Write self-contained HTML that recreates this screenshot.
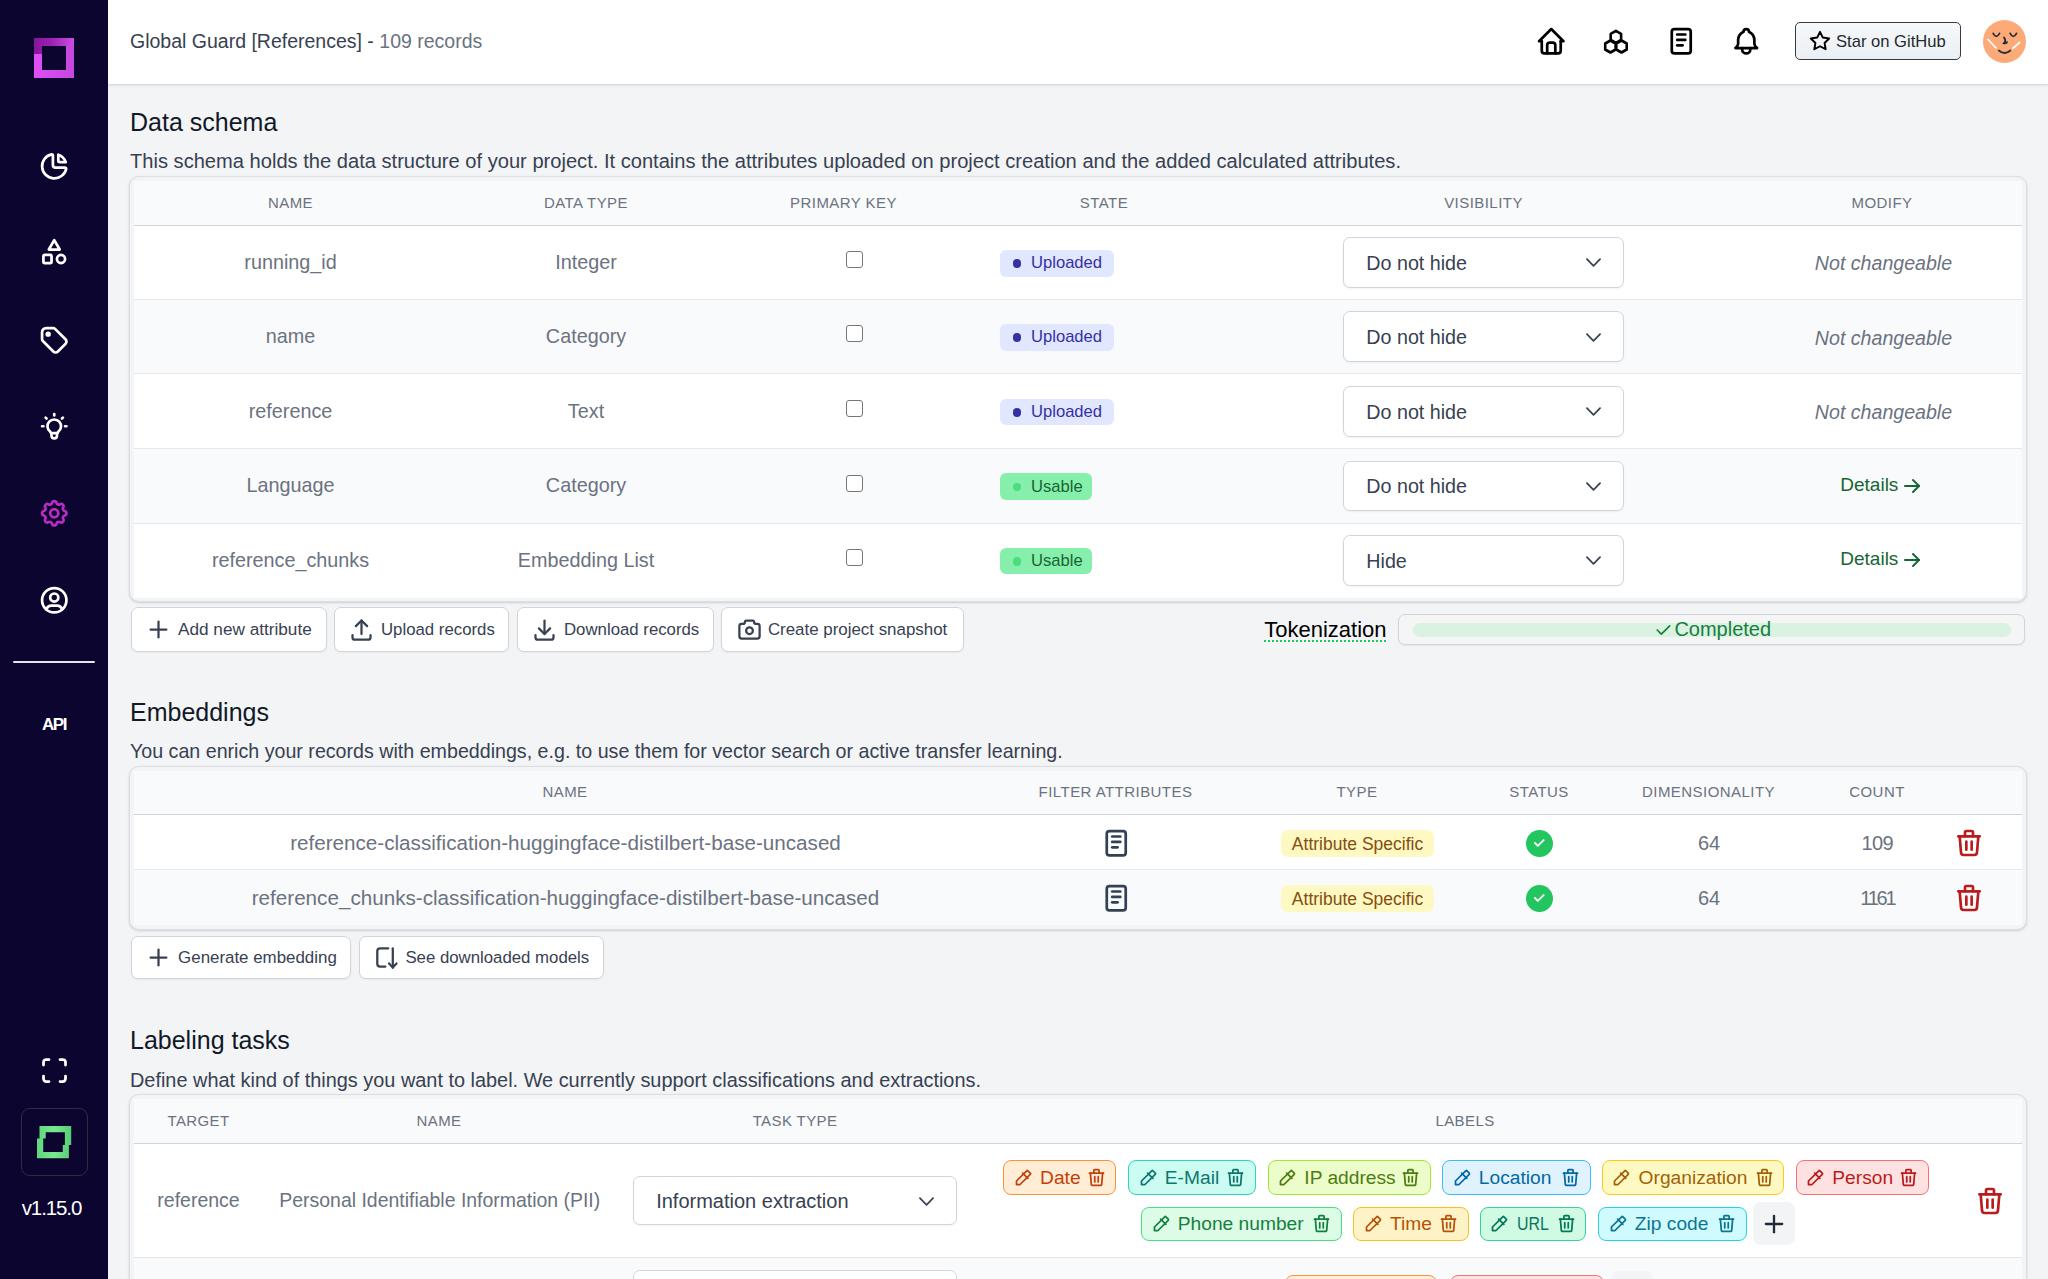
<!DOCTYPE html><html><head><meta charset="utf-8"><style>
html,body{margin:0;padding:0;width:2048px;height:1279px;overflow:hidden;background:#f3f4f6;font-family:"Liberation Sans", sans-serif;}
.t{position:absolute;white-space:nowrap;overflow:visible}
.i{position:absolute;overflow:visible}
.b{position:absolute;box-sizing:border-box}

</style></head><body>
<div class="b" style="left:108px;top:0px;width:1940px;height:84px;background:#fff;box-shadow:0 1px 3px rgba(0,0,0,0.10),0 1px 2px rgba(0,0,0,0.06)"></div>
<div class="t" style="left:130.0px;top:26.5px;width:1400px;height:29px;line-height:29px;font-size:19.5px;color:#374151;text-align:left;font-weight:400;font-style:normal;letter-spacing:0px;">Global Guard [References] - <span style="color:#6b7280">109 records</span></div>
<svg class="i" style="left:1534.5px;top:25.0px;width:32.5px;height:32.5px;" viewBox="0 0 24 24" fill="none" stroke="#000" stroke-width="2" stroke-linecap="round" stroke-linejoin="round"><path d="M5 12l-2 0l9 -9l9 9l-2 0"/><path d="M5 12v7a2 2 0 0 0 2 2h10a2 2 0 0 0 2 -2v-7"/><path d="M9 21v-6a2 2 0 0 1 2 -2h2a2 2 0 0 1 2 2v6"/></svg>
<svg class="i" style="left:1664.8px;top:25.0px;width:32.5px;height:32.5px;" viewBox="0 0 24 24" fill="none" stroke="#000" stroke-width="2" stroke-linecap="round" stroke-linejoin="round"><path d="M5 3m0 2a2 2 0 0 1 2 -2h10a2 2 0 0 1 2 2v14a2 2 0 0 1 -2 2h-10a2 2 0 0 1 -2 -2z"/><path d="M9 7l6 0"/><path d="M9 11l6 0"/><path d="M9 15l4 0"/></svg>
<svg class="i" style="left:1729.8px;top:25.0px;width:32.5px;height:32.5px;" viewBox="0 0 24 24" fill="none" stroke="#000" stroke-width="2" stroke-linecap="round" stroke-linejoin="round"><path d="M10 5a2 2 0 1 1 4 0a7 7 0 0 1 4 6v3a4 4 0 0 0 2 3h-16a4 4 0 0 0 2 -3v-3a7 7 0 0 1 4 -6"/><path d="M9 17v1a3 3 0 0 0 6 0v-1"/></svg>
<svg class="i" style="left:1600px;top:25px;width:32px;height:32px" viewBox="0 0 32 32" fill="none" stroke="#000" stroke-width="2.6" stroke-linejoin="round"><path d="M15.90 5.90L21.10 8.90L21.10 14.90L15.90 17.90L10.70 14.90L10.70 8.90ZM10.40 15.50L15.60 18.50L15.60 24.50L10.40 27.50L5.20 24.50L5.20 18.50ZM21.50 15.50L26.70 18.50L26.70 24.50L21.50 27.50L16.30 24.50L16.30 18.50Z"/></svg>
<div class="b" style="left:1795px;top:22px;width:166px;height:38px;border:1.3px solid #373b41;border-radius:5px;background:linear-gradient(#f6f8fa,#ebf0f4)"></div>
<svg class="i" style="left:1809.3px;top:29.5px;width:22px;height:22px;" viewBox="0 0 24 24" fill="none" stroke="#000" stroke-width="2.1" stroke-linecap="round" stroke-linejoin="round"><path d="M12 17.75l-6.172 3.245l1.179 -6.873l-5 -4.867l6.9 -1l3.086 -6.253l3.086 6.253l6.9 1l-5 4.867l1.179 6.873z"/></svg>
<div class="t" style="left:1836.0px;top:30.0px;width:1400px;height:24px;line-height:24px;font-size:16.6px;color:#24292f;text-align:left;font-weight:400;font-style:normal;letter-spacing:0px;">Star on GitHub</div>
<div class="b" style="left:1983px;top:19.5px;width:43.3px;height:43.3px;border-radius:50%;background:#fbaa78"></div>
<svg class="i" style="left:1983px;top:19.5px;width:43.3px;height:43.3px" viewBox="0 0 43.3 43.3" fill="none" stroke-linecap="round">
<path d="M5 19.5l8 8.5" stroke="#fff" stroke-width="1.7"/><path d="M36.5 22.5l-6.7 6" stroke="#fff" stroke-width="1.7"/>
<path d="M10.2 13.4q3 6 6.3 0" stroke="#2b2b3a" stroke-width="1.8"/><path d="M27.2 13.4q3 6 6.3 0" stroke="#2b2b3a" stroke-width="1.8"/>
<path d="M21 17.5q2.5 3 0 5.7q2.5 0.5 3 -1" stroke="#2b2b3a" stroke-width="1.9"/><path d="M15.8 30.5q5.8 5 11.6 0" stroke="#2b2b3a" stroke-width="1.7"/>
</svg>
<div class="b" style="left:0px;top:0px;width:108px;height:1279px;background:#0b0530"></div>
<svg class="i" style="left:34px;top:38px;width:40px;height:40px" viewBox="0 0 40 40">
<defs><linearGradient id="lg1" x1="0" y1="0" x2="1" y2="0"><stop offset="0" stop-color="#84169a"/><stop offset="0.45" stop-color="#9c22b4"/><stop offset="1" stop-color="#cf4de6"/></linearGradient>
<linearGradient id="lg2" x1="0" y1="0" x2="1" y2="0"><stop offset="0" stop-color="#e14ff7"/><stop offset="1" stop-color="#c646de"/></linearGradient></defs>
<path d="M0 0H40V40H0Z M8 8V32H32V8Z" fill="url(#lg2)" fill-rule="evenodd"/>
<path d="M0 0H40V8H8V16H0Z" fill="url(#lg1)"/>
</svg>
<svg class="i" style="left:37.8px;top:150.2px;width:32.5px;height:32.5px;" viewBox="0 0 24 24" fill="none" stroke="#fff" stroke-width="2" stroke-linecap="round" stroke-linejoin="round"><path d="M10 3.2a9 9 0 1 0 10.8 10.8a1 1 0 0 0 -1 -1h-6.8a2 2 0 0 1 -2 -2v-7a.9 .9 0 0 0 -1 -.8"/><path d="M15 3.5a9 9 0 0 1 5.5 5.5h-4.5a1 1 0 0 1 -1 -1v-4.5"/></svg>
<svg class="i" style="left:37.8px;top:236.2px;width:32.5px;height:32.5px;" viewBox="0 0 24 24" fill="none" stroke="#fff" stroke-width="2" stroke-linecap="round" stroke-linejoin="round"><path d="M12 3l-4 7h8z"/><path d="M17 17m-3 0a3 3 0 1 0 6 0a3 3 0 1 0 -6 0"/><path d="M4 14m0 1a1 1 0 0 1 1 -1h4a1 1 0 0 1 1 1v4a1 1 0 0 1 -1 1h-4a1 1 0 0 1 -1 -1z"/></svg>
<svg class="i" style="left:37.8px;top:323.8px;width:32.5px;height:32.5px;" viewBox="0 0 24 24" fill="none" stroke="#fff" stroke-width="2" stroke-linecap="round" stroke-linejoin="round"><path d="M7.5 7.5m-1 0a1 1 0 1 0 2 0a1 1 0 1 0 -2 0"/><path d="M3 6v5.172a2 2 0 0 0 .586 1.414l7.71 7.71a2.41 2.41 0 0 0 3.408 0l5.592 -5.592a2.41 2.41 0 0 0 0 -3.408l-7.71 -7.71a2 2 0 0 0 -1.414 -.586h-5.172a3 3 0 0 0 -3 3z"/></svg>
<svg class="i" style="left:37.8px;top:410.2px;width:32.5px;height:32.5px;" viewBox="0 0 24 24" fill="none" stroke="#fff" stroke-width="2" stroke-linecap="round" stroke-linejoin="round"><path d="M3 12h1m8 -9v1m8 8h1m-15.4 -6.4l.7 .7m12.1 -.7l-.7 .7"/><path d="M9 16a5 5 0 1 1 6 0a3.5 3.5 0 0 0 -1 3a2 2 0 0 1 -4 0a3.5 3.5 0 0 0 -1 -3"/><path d="M9.7 17l4.6 0"/></svg>
<svg class="i" style="left:37.8px;top:583.8px;width:32.5px;height:32.5px;" viewBox="0 0 24 24" fill="none" stroke="#fff" stroke-width="2" stroke-linecap="round" stroke-linejoin="round"><path d="M12 12m-9 0a9 9 0 1 0 18 0a9 9 0 1 0 -18 0"/><path d="M12 10m-3 0a3 3 0 1 0 6 0a3 3 0 1 0 -6 0"/><path d="M6.168 18.849a4 4 0 0 1 3.832 -2.849h4a4 4 0 0 1 3.834 2.855"/></svg>
<svg class="i" style="left:37.8px;top:497.0px;width:32.5px;height:32.5px;" viewBox="0 0 24 24" fill="none" stroke="#b72cc2" stroke-width="2" stroke-linecap="round" stroke-linejoin="round"><path d="M10.325 4.317c.426 -1.756 2.924 -1.756 3.35 0a1.724 1.724 0 0 0 2.573 1.066c1.543 -.94 3.31 .826 2.37 2.37a1.724 1.724 0 0 0 1.065 2.572c1.756 .426 1.756 2.924 0 3.35a1.724 1.724 0 0 0 -1.066 2.573c.94 1.543 -.826 3.31 -2.37 2.37a1.724 1.724 0 0 0 -2.572 1.065c-.426 1.756 -2.924 1.756 -3.35 0a1.724 1.724 0 0 0 -2.573 -1.066c-1.543 .94 -3.31 -.826 -2.37 -2.37a1.724 1.724 0 0 0 -1.065 -2.572c-1.756 -.426 -1.756 -2.924 0 -3.35a1.724 1.724 0 0 0 1.066 -2.573c-.94 -1.543 .826 -3.31 2.37 -2.37c1 .608 2.296 .07 2.572 -1.065z"/><path d="M9 12a3 3 0 1 0 6 0a3 3 0 0 0 -6 0"/></svg>
<div class="b" style="left:13px;top:661px;width:82px;height:2px;background:#e5e5ea;border-radius:2px"></div>
<div class="t" style="left:4.0px;top:712.0px;width:100px;height:25px;line-height:25px;font-size:17px;color:#fff;text-align:center;font-weight:700;font-style:normal;letter-spacing:-1.5px;">API</div>
<svg class="i" style="left:37.5px;top:1053.5px;width:33px;height:33px;" viewBox="0 0 24 24" fill="none" stroke="#fff" stroke-width="2" stroke-linecap="round" stroke-linejoin="round"><path d="M4 8v-2a2 2 0 0 1 2 -2h2"/><path d="M4 16v2a2 2 0 0 0 2 2h2"/><path d="M16 4h2a2 2 0 0 1 2 2v2"/><path d="M16 20h2a2 2 0 0 0 2 -2v-2"/></svg>
<div class="b" style="left:20.6px;top:1108px;width:67.1px;height:67.70000000000005px;border:1px solid #2c2f42;border-radius:9px"></div>
<svg class="i" style="left:37px;top:1125.5px;width:34.5px;height:32.5px" viewBox="0 0 34.5 32.5">
<defs><linearGradient id="gg" x1="0" y1="0" x2="1" y2="0"><stop offset="0" stop-color="#5fd77c"/><stop offset="0.5" stop-color="#7ae892"/><stop offset="1" stop-color="#56cd72"/></linearGradient></defs>
<path fill="url(#gg)" fill-rule="evenodd" d="M2.5 0H34.2V19H31.9V32.3H0V12.6H2.5Z M8.7 6.2V12.6H6.2V26.1H25.8V19H27.9V6.2Z"/>
</svg>
<div class="t" style="left:1.5px;top:1193.3px;width:100px;height:30px;line-height:30px;font-size:20.5px;color:#fff;text-align:center;font-weight:400;font-style:normal;letter-spacing:-1.1px;">v1.15.0</div>
<div class="t" style="left:130.0px;top:103.8px;width:1400px;height:37px;line-height:37px;font-size:25px;color:#111827;text-align:left;font-weight:400;font-style:normal;letter-spacing:0px;">Data schema</div>
<div class="t" style="left:130.0px;top:146.3px;width:1400px;height:30px;line-height:30px;font-size:20.13px;color:#374151;text-align:left;font-weight:400;font-style:normal;letter-spacing:0px;">This schema holds the data structure of your project. It contains the attributes uploaded on project creation and the added calculated attributes.</div>
<div class="b" style="left:129px;top:176.4px;width:1898px;height:426.0px;border:1px solid #dcdee3;border-radius:10px;background:#f3f4f6;box-shadow:0 1px 3px rgba(0,0,0,0.10),0 1px 2px rgba(0,0,0,0.06)"></div>
<div class="b" style="left:134px;top:181px;width:1888px;height:416.5px;background:#fff"></div>
<div class="b" style="left:134px;top:181px;width:1888px;height:45px;background:#f9fafb;border-bottom:1.5px solid #d1d5db"></div>
<div class="t" style="left:-109.5px;top:192.0px;width:800px;height:22px;line-height:22px;font-size:15px;color:#6b7280;text-align:center;font-weight:400;font-style:normal;letter-spacing:0.45px;">NAME</div>
<div class="t" style="left:186.0px;top:192.0px;width:800px;height:22px;line-height:22px;font-size:15px;color:#6b7280;text-align:center;font-weight:400;font-style:normal;letter-spacing:0.45px;">DATA TYPE</div>
<div class="t" style="left:443.5px;top:192.0px;width:800px;height:22px;line-height:22px;font-size:15px;color:#6b7280;text-align:center;font-weight:400;font-style:normal;letter-spacing:0.45px;">PRIMARY KEY</div>
<div class="t" style="left:704.0px;top:192.0px;width:800px;height:22px;line-height:22px;font-size:15px;color:#6b7280;text-align:center;font-weight:400;font-style:normal;letter-spacing:0.45px;">STATE</div>
<div class="t" style="left:1083.5px;top:192.0px;width:800px;height:22px;line-height:22px;font-size:15px;color:#6b7280;text-align:center;font-weight:400;font-style:normal;letter-spacing:0.45px;">VISIBILITY</div>
<div class="t" style="left:1482.0px;top:192.0px;width:800px;height:22px;line-height:22px;font-size:15px;color:#6b7280;text-align:center;font-weight:400;font-style:normal;letter-spacing:0.45px;">MODIFY</div>
<div class="b" style="left:134px;top:226px;width:1888px;height:73.5px;background:#fff;border-bottom:1px solid #e5e7eb;"></div>
<div class="t" style="left:-109.5px;top:247.9px;width:800px;height:29px;line-height:29px;font-size:19.8px;color:#6b7280;text-align:center;font-weight:400;font-style:normal;letter-spacing:0px;">running_id</div>
<div class="t" style="left:186.0px;top:247.9px;width:800px;height:29px;line-height:29px;font-size:19.8px;color:#6b7280;text-align:center;font-weight:400;font-style:normal;letter-spacing:0px;">Integer</div>
<div class="b" style="left:846px;top:251.25px;width:17px;height:17.0px;border:1.4px solid #767676;border-radius:3px;background:#fff"></div>
<div class="b" style="left:1000px;top:249.95px;width:114px;height:26.69999999999999px;background:#e0e7ff;border-radius:6px"></div>
<div class="b" style="left:1012.5px;top:259.3px;width:8.6px;height:8.6px;border-radius:50%;background:#3730a3"></div>
<div class="t" style="left:1031.0px;top:251.2px;width:1400px;height:24px;line-height:24px;font-size:16.6px;color:#3730a3;text-align:left;font-weight:400;font-style:normal;letter-spacing:0px;">Uploaded</div>
<div class="b" style="left:1343.3px;top:237.25px;width:281.10000000000014px;height:50.5px;border:1px solid #d1d5db;border-radius:7px;background:#fff;box-shadow:0 1px 2px rgba(0,0,0,0.05)"></div>
<div class="t" style="left:1366.3px;top:248.9px;width:1400px;height:29px;line-height:29px;font-size:19.7px;color:#374151;text-align:left;font-weight:400;font-style:normal;letter-spacing:0px;">Do not hide</div>
<svg class="i" style="left:1583.2px;top:252.4px;width:21px;height:21px;" viewBox="0 0 24 24" fill="none" stroke="#374151" stroke-width="2" stroke-linecap="round" stroke-linejoin="round"><path d="M19.5 8.25l-7.5 7.5-7.5-7.5"/></svg>
<div class="t" style="left:1483.5px;top:249.4px;width:800px;height:29px;line-height:29px;font-size:19.6px;color:#6b7280;text-align:center;font-weight:400;font-style:italic;letter-spacing:0px;">Not changeable</div>
<div class="b" style="left:134px;top:299.5px;width:1888px;height:74.69999999999999px;background:#f9fafb;border-bottom:1px solid #e5e7eb;"></div>
<div class="t" style="left:-109.5px;top:322.1px;width:800px;height:29px;line-height:29px;font-size:19.8px;color:#6b7280;text-align:center;font-weight:400;font-style:normal;letter-spacing:0px;">name</div>
<div class="t" style="left:186.0px;top:322.1px;width:800px;height:29px;line-height:29px;font-size:19.8px;color:#6b7280;text-align:center;font-weight:400;font-style:normal;letter-spacing:0px;">Category</div>
<div class="b" style="left:846px;top:325.35px;width:17px;height:17.0px;border:1.4px solid #767676;border-radius:3px;background:#fff"></div>
<div class="b" style="left:1000px;top:324.05px;width:114px;height:26.69999999999999px;background:#e0e7ff;border-radius:6px"></div>
<div class="b" style="left:1012.5px;top:333.4px;width:8.6px;height:8.6px;border-radius:50%;background:#3730a3"></div>
<div class="t" style="left:1031.0px;top:325.4px;width:1400px;height:24px;line-height:24px;font-size:16.6px;color:#3730a3;text-align:left;font-weight:400;font-style:normal;letter-spacing:0px;">Uploaded</div>
<div class="b" style="left:1343.3px;top:311.35px;width:281.10000000000014px;height:50.5px;border:1px solid #d1d5db;border-radius:7px;background:#fff;box-shadow:0 1px 2px rgba(0,0,0,0.05)"></div>
<div class="t" style="left:1366.3px;top:323.1px;width:1400px;height:29px;line-height:29px;font-size:19.7px;color:#374151;text-align:left;font-weight:400;font-style:normal;letter-spacing:0px;">Do not hide</div>
<svg class="i" style="left:1583.2px;top:326.6px;width:21px;height:21px;" viewBox="0 0 24 24" fill="none" stroke="#374151" stroke-width="2" stroke-linecap="round" stroke-linejoin="round"><path d="M19.5 8.25l-7.5 7.5-7.5-7.5"/></svg>
<div class="t" style="left:1483.5px;top:323.6px;width:800px;height:29px;line-height:29px;font-size:19.6px;color:#6b7280;text-align:center;font-weight:400;font-style:italic;letter-spacing:0px;">Not changeable</div>
<div class="b" style="left:134px;top:374.2px;width:1888px;height:74.69999999999999px;background:#fff;border-bottom:1px solid #e5e7eb;"></div>
<div class="t" style="left:-109.5px;top:396.7px;width:800px;height:29px;line-height:29px;font-size:19.8px;color:#6b7280;text-align:center;font-weight:400;font-style:normal;letter-spacing:0px;">reference</div>
<div class="t" style="left:186.0px;top:396.7px;width:800px;height:29px;line-height:29px;font-size:19.8px;color:#6b7280;text-align:center;font-weight:400;font-style:normal;letter-spacing:0px;">Text</div>
<div class="b" style="left:846px;top:400.04999999999995px;width:17px;height:17.0px;border:1.4px solid #767676;border-radius:3px;background:#fff"></div>
<div class="b" style="left:1000px;top:398.74999999999994px;width:114px;height:26.69999999999999px;background:#e0e7ff;border-radius:6px"></div>
<div class="b" style="left:1012.5px;top:408.1px;width:8.6px;height:8.6px;border-radius:50%;background:#3730a3"></div>
<div class="t" style="left:1031.0px;top:400.0px;width:1400px;height:24px;line-height:24px;font-size:16.6px;color:#3730a3;text-align:left;font-weight:400;font-style:normal;letter-spacing:0px;">Uploaded</div>
<div class="b" style="left:1343.3px;top:386.04999999999995px;width:281.10000000000014px;height:50.5px;border:1px solid #d1d5db;border-radius:7px;background:#fff;box-shadow:0 1px 2px rgba(0,0,0,0.05)"></div>
<div class="t" style="left:1366.3px;top:397.7px;width:1400px;height:29px;line-height:29px;font-size:19.7px;color:#374151;text-align:left;font-weight:400;font-style:normal;letter-spacing:0px;">Do not hide</div>
<svg class="i" style="left:1583.2px;top:401.2px;width:21px;height:21px;" viewBox="0 0 24 24" fill="none" stroke="#374151" stroke-width="2" stroke-linecap="round" stroke-linejoin="round"><path d="M19.5 8.25l-7.5 7.5-7.5-7.5"/></svg>
<div class="t" style="left:1483.5px;top:398.2px;width:800px;height:29px;line-height:29px;font-size:19.6px;color:#6b7280;text-align:center;font-weight:400;font-style:italic;letter-spacing:0px;">Not changeable</div>
<div class="b" style="left:134px;top:448.9px;width:1888px;height:74.70000000000005px;background:#f9fafb;border-bottom:1px solid #e5e7eb;"></div>
<div class="t" style="left:-109.5px;top:471.4px;width:800px;height:29px;line-height:29px;font-size:19.8px;color:#6b7280;text-align:center;font-weight:400;font-style:normal;letter-spacing:0px;">Language</div>
<div class="t" style="left:186.0px;top:471.4px;width:800px;height:29px;line-height:29px;font-size:19.8px;color:#6b7280;text-align:center;font-weight:400;font-style:normal;letter-spacing:0px;">Category</div>
<div class="b" style="left:846px;top:474.75px;width:17px;height:17.0px;border:1.4px solid #767676;border-radius:3px;background:#fff"></div>
<div class="b" style="left:1000px;top:473.45px;width:92px;height:26.69999999999999px;background:#86efac;border-radius:6px"></div>
<div class="b" style="left:1012.5px;top:482.8px;width:8.6px;height:8.6px;border-radius:50%;background:#4ade80"></div>
<div class="t" style="left:1031.0px;top:474.8px;width:1400px;height:24px;line-height:24px;font-size:16.6px;color:#166534;text-align:left;font-weight:400;font-style:normal;letter-spacing:0px;">Usable</div>
<div class="b" style="left:1343.3px;top:460.75px;width:281.10000000000014px;height:50.5px;border:1px solid #d1d5db;border-radius:7px;background:#fff;box-shadow:0 1px 2px rgba(0,0,0,0.05)"></div>
<div class="t" style="left:1366.3px;top:472.4px;width:1400px;height:29px;line-height:29px;font-size:19.7px;color:#374151;text-align:left;font-weight:400;font-style:normal;letter-spacing:0px;">Do not hide</div>
<svg class="i" style="left:1583.2px;top:475.9px;width:21px;height:21px;" viewBox="0 0 24 24" fill="none" stroke="#374151" stroke-width="2" stroke-linecap="round" stroke-linejoin="round"><path d="M19.5 8.25l-7.5 7.5-7.5-7.5"/></svg>
<div class="t" style="left:1840.3px;top:470.9px;width:1400px;height:28px;line-height:28px;font-size:19px;color:#166534;text-align:left;font-weight:400;font-style:normal;letter-spacing:0px;">Details</div>
<svg class="i" style="left:1900.0px;top:473.6px;width:24px;height:24px;" viewBox="0 0 24 24" fill="none" stroke="#166534" stroke-width="2" stroke-linecap="round" stroke-linejoin="round"><path d="M5 12l14 0"/><path d="M13 18l6 -6"/><path d="M13 6l6 6"/></svg>
<div class="b" style="left:134px;top:523.6px;width:1888px;height:73.89999999999998px;background:#fff;"></div>
<div class="t" style="left:-109.5px;top:545.8px;width:800px;height:29px;line-height:29px;font-size:19.8px;color:#6b7280;text-align:center;font-weight:400;font-style:normal;letter-spacing:0px;">reference_chunks</div>
<div class="t" style="left:186.0px;top:545.8px;width:800px;height:29px;line-height:29px;font-size:19.8px;color:#6b7280;text-align:center;font-weight:400;font-style:normal;letter-spacing:0px;">Embedding List</div>
<div class="b" style="left:846px;top:549.05px;width:17px;height:17.0px;border:1.4px solid #767676;border-radius:3px;background:#fff"></div>
<div class="b" style="left:1000px;top:547.75px;width:92px;height:26.700000000000045px;background:#86efac;border-radius:6px"></div>
<div class="b" style="left:1012.5px;top:557.2px;width:8.6px;height:8.6px;border-radius:50%;background:#4ade80"></div>
<div class="t" style="left:1031.0px;top:549.0px;width:1400px;height:24px;line-height:24px;font-size:16.6px;color:#166534;text-align:left;font-weight:400;font-style:normal;letter-spacing:0px;">Usable</div>
<div class="b" style="left:1343.3px;top:535.05px;width:281.10000000000014px;height:50.5px;border:1px solid #d1d5db;border-radius:7px;background:#fff;box-shadow:0 1px 2px rgba(0,0,0,0.05)"></div>
<div class="t" style="left:1366.3px;top:546.8px;width:1400px;height:29px;line-height:29px;font-size:19.7px;color:#374151;text-align:left;font-weight:400;font-style:normal;letter-spacing:0px;">Hide</div>
<svg class="i" style="left:1583.2px;top:550.2px;width:21px;height:21px;" viewBox="0 0 24 24" fill="none" stroke="#374151" stroke-width="2" stroke-linecap="round" stroke-linejoin="round"><path d="M19.5 8.25l-7.5 7.5-7.5-7.5"/></svg>
<div class="t" style="left:1840.3px;top:545.2px;width:1400px;height:28px;line-height:28px;font-size:19px;color:#166534;text-align:left;font-weight:400;font-style:normal;letter-spacing:0px;">Details</div>
<svg class="i" style="left:1900.0px;top:548.0px;width:24px;height:24px;" viewBox="0 0 24 24" fill="none" stroke="#166534" stroke-width="2" stroke-linecap="round" stroke-linejoin="round"><path d="M5 12l14 0"/><path d="M13 18l6 -6"/><path d="M13 6l6 6"/></svg>
<div class="b" style="left:130.9px;top:607.4px;width:196.1px;height:44.89999999999998px;border:1px solid #d1d5db;border-radius:7px;background:#fff;box-shadow:0 1px 2px rgba(0,0,0,0.05)"></div>
<svg class="i" style="left:145.0px;top:616.3px;width:27px;height:27px;" viewBox="0 0 24 24" fill="none" stroke="#374151" stroke-width="2" stroke-linecap="round" stroke-linejoin="round"><path d="M12 5l0 14"/><path d="M5 12l14 0"/></svg>
<div class="t" style="left:178.0px;top:617.3px;width:1400px;height:25px;line-height:25px;font-size:17.2px;color:#374151;text-align:left;font-weight:400;font-style:normal;letter-spacing:0px;">Add new attribute</div>
<div class="b" style="left:334px;top:607.4px;width:175.39999999999998px;height:44.89999999999998px;border:1px solid #d1d5db;border-radius:7px;background:#fff;box-shadow:0 1px 2px rgba(0,0,0,0.05)"></div>
<svg class="i" style="left:348.3px;top:616.3px;width:27px;height:27px;" viewBox="0 0 24 24" fill="none" stroke="#374151" stroke-width="2" stroke-linecap="round" stroke-linejoin="round"><path d="M4 17v2a2 2 0 0 0 2 2h12a2 2 0 0 0 2 -2v-2"/><path d="M7 9l5 -5l5 5"/><path d="M12 4l0 12"/></svg>
<div class="t" style="left:381.0px;top:617.3px;width:1400px;height:25px;line-height:25px;font-size:16.8px;color:#374151;text-align:left;font-weight:400;font-style:normal;letter-spacing:0px;">Upload records</div>
<div class="b" style="left:516.7px;top:607.4px;width:197.69999999999993px;height:44.89999999999998px;border:1px solid #d1d5db;border-radius:7px;background:#fff;box-shadow:0 1px 2px rgba(0,0,0,0.05)"></div>
<svg class="i" style="left:531.1px;top:616.3px;width:27px;height:27px;" viewBox="0 0 24 24" fill="none" stroke="#374151" stroke-width="2" stroke-linecap="round" stroke-linejoin="round"><path d="M4 17v2a2 2 0 0 0 2 2h12a2 2 0 0 0 2 -2v-2"/><path d="M7 11l5 5l5 -5"/><path d="M12 4l0 12"/></svg>
<div class="t" style="left:564.0px;top:617.3px;width:1400px;height:25px;line-height:25px;font-size:16.8px;color:#374151;text-align:left;font-weight:400;font-style:normal;letter-spacing:0px;">Download records</div>
<div class="b" style="left:721px;top:607.4px;width:243px;height:44.89999999999998px;border:1px solid #d1d5db;border-radius:7px;background:#fff;box-shadow:0 1px 2px rgba(0,0,0,0.05)"></div>
<svg class="i" style="left:735.5px;top:616.3px;width:27px;height:27px;" viewBox="0 0 24 24" fill="none" stroke="#374151" stroke-width="2" stroke-linecap="round" stroke-linejoin="round"><path d="M5 7h1a2 2 0 0 0 2 -2a1 1 0 0 1 1 -1h6a1 1 0 0 1 1 1a2 2 0 0 0 2 2h1a2 2 0 0 1 2 2v9a2 2 0 0 1 -2 2h-14a2 2 0 0 1 -2 -2v-9a2 2 0 0 1 2 -2"/><path d="M9 13a3 3 0 1 0 6 0a3 3 0 0 0 -6 0"/></svg>
<div class="t" style="left:767.9px;top:617.3px;width:1400px;height:25px;line-height:25px;font-size:16.9px;color:#374151;text-align:left;font-weight:400;font-style:normal;letter-spacing:0px;">Create project snapshot</div>
<div class="t" style="left:1264.2px;top:613.0px;width:1400px;height:33px;line-height:33px;font-size:22px;color:#000;text-align:left;font-weight:400;font-style:normal;letter-spacing:0px;">Tokenization</div>
<div class="b" style="left:1264.2px;top:640px;width:122px;height:0;border-top:2px dotted #22c55e"></div>
<div class="b" style="left:1398.4px;top:614.3px;width:627.0999999999999px;height:30.90000000000009px;border:1px solid #d1d5db;border-radius:7px;background:#f5f5f5;box-shadow:0 1px 2px rgba(0,0,0,0.06)"></div>
<div class="b" style="left:1412.6px;top:622.9px;width:598.4000000000001px;height:13.700000000000045px;background:#daf2e1;border-radius:8px"></div>
<svg class="i" style="left:1653.2px;top:619.8px;width:20px;height:20px;" viewBox="0 0 24 24" fill="none" stroke="#15803d" stroke-width="2" stroke-linecap="round" stroke-linejoin="round"><path d="M5 12l5 5l10 -10"/></svg>
<div class="t" style="left:1674.4px;top:614.3px;width:1400px;height:30px;line-height:30px;font-size:20px;color:#15803d;text-align:left;font-weight:400;font-style:normal;letter-spacing:0px;">Completed</div>
<div class="t" style="left:130.0px;top:693.8px;width:1400px;height:37px;line-height:37px;font-size:25px;color:#111827;text-align:left;font-weight:400;font-style:normal;letter-spacing:0px;">Embeddings</div>
<div class="t" style="left:130.0px;top:736.9px;width:1400px;height:29px;line-height:29px;font-size:19.65px;color:#374151;text-align:left;font-weight:400;font-style:normal;letter-spacing:0px;">You can enrich your records with embeddings, e.g. to use them for vector search or active transfer learning.</div>
<div class="b" style="left:129px;top:765.6px;width:1898px;height:164.0px;border:1px solid #dcdee3;border-radius:10px;background:#f3f4f6;box-shadow:0 1px 3px rgba(0,0,0,0.10),0 1px 2px rgba(0,0,0,0.06)"></div>
<div class="b" style="left:134px;top:770.6px;width:1888px;height:154.69999999999993px;background:#fff"></div>
<div class="b" style="left:134px;top:770.6px;width:1888px;height:44.60000000000002px;background:#f9fafb;border-bottom:1.5px solid #d1d5db"></div>
<div class="t" style="left:165.0px;top:781.0px;width:800px;height:22px;line-height:22px;font-size:15px;color:#6b7280;text-align:center;font-weight:400;font-style:normal;letter-spacing:0.45px;">NAME</div>
<div class="t" style="left:715.5px;top:781.0px;width:800px;height:22px;line-height:22px;font-size:15px;color:#6b7280;text-align:center;font-weight:400;font-style:normal;letter-spacing:0.45px;">FILTER ATTRIBUTES</div>
<div class="t" style="left:957.0px;top:781.0px;width:800px;height:22px;line-height:22px;font-size:15px;color:#6b7280;text-align:center;font-weight:400;font-style:normal;letter-spacing:0.45px;">TYPE</div>
<div class="t" style="left:1139.0px;top:781.0px;width:800px;height:22px;line-height:22px;font-size:15px;color:#6b7280;text-align:center;font-weight:400;font-style:normal;letter-spacing:0.45px;">STATUS</div>
<div class="t" style="left:1308.5px;top:781.0px;width:800px;height:22px;line-height:22px;font-size:15px;color:#6b7280;text-align:center;font-weight:400;font-style:normal;letter-spacing:0.45px;">DIMENSIONALITY</div>
<div class="t" style="left:1477.0px;top:781.0px;width:800px;height:22px;line-height:22px;font-size:15px;color:#6b7280;text-align:center;font-weight:400;font-style:normal;letter-spacing:0.45px;">COUNT</div>
<div class="b" style="left:134px;top:815.2px;width:1888px;height:55.299999999999955px;background:#fff;border-bottom:1px solid #e5e7eb;"></div>
<div class="t" style="left:115.5px;top:827.9px;width:900px;height:30px;line-height:30px;font-size:20.65px;color:#6b7280;text-align:center;font-weight:400;font-style:normal;letter-spacing:0px;">reference-classification-huggingface-distilbert-base-uncased</div>
<svg class="i" style="left:1099.8px;top:826.6px;width:32.5px;height:32.5px;" viewBox="0 0 24 24" fill="none" stroke="#334155" stroke-width="2" stroke-linecap="round" stroke-linejoin="round"><path d="M5 3m0 2a2 2 0 0 1 2 -2h10a2 2 0 0 1 2 2v14a2 2 0 0 1 -2 2h-10a2 2 0 0 1 -2 -2z"/><path d="M9 7l6 0"/><path d="M9 11l6 0"/><path d="M9 15l4 0"/></svg>
<div class="b" style="left:1281px;top:830.0500000000001px;width:153px;height:27.0px;background:#fef9c3;border-radius:7px"></div>
<div class="t" style="left:957.5px;top:830.6px;width:800px;height:26px;line-height:26px;font-size:17.5px;color:#854d0e;text-align:center;font-weight:400;font-style:normal;letter-spacing:0px;">Attribute Specific</div>
<div class="b" style="left:1525.8px;top:829.5px;width:27px;height:27px;border-radius:50%;background:#22c55e"></div>
<svg class="i" style="left:1532.3px;top:836.1px;width:14px;height:14px;" viewBox="0 0 24 24" fill="none" stroke="#fff" stroke-width="3.2" stroke-linecap="round" stroke-linejoin="round"><path d="M5 12l5 5l10 -10"/></svg>
<div class="t" style="left:1309.0px;top:827.9px;width:800px;height:30px;line-height:30px;font-size:20px;color:#6b7280;text-align:center;font-weight:400;font-style:normal;letter-spacing:0px;">64</div>
<div class="t" style="left:1477.3px;top:827.9px;width:800px;height:30px;line-height:30px;font-size:20px;color:#6b7280;text-align:center;font-weight:400;font-style:normal;letter-spacing:-0.6px;">109</div>
<svg class="i" style="left:1952.8px;top:826.9px;width:32px;height:32px;" viewBox="0 0 24 24" fill="none" stroke="#b91c1c" stroke-width="2" stroke-linecap="round" stroke-linejoin="round"><path d="M4 7l16 0"/><path d="M10 11l0 6"/><path d="M14 11l0 6"/><path d="M5 7l1 12a2 2 0 0 0 2 2h8a2 2 0 0 0 2 -2l1 -12"/><path d="M9 7v-3a1 1 0 0 1 1 -1h4a1 1 0 0 1 1 1v3"/></svg>
<div class="b" style="left:134px;top:870.5px;width:1888px;height:54.799999999999955px;background:#f9fafb;"></div>
<div class="t" style="left:115.5px;top:882.9px;width:900px;height:30px;line-height:30px;font-size:20.65px;color:#6b7280;text-align:center;font-weight:400;font-style:normal;letter-spacing:0px;">reference_chunks-classification-huggingface-distilbert-base-uncased</div>
<svg class="i" style="left:1099.8px;top:881.6px;width:32.5px;height:32.5px;" viewBox="0 0 24 24" fill="none" stroke="#334155" stroke-width="2" stroke-linecap="round" stroke-linejoin="round"><path d="M5 3m0 2a2 2 0 0 1 2 -2h10a2 2 0 0 1 2 2v14a2 2 0 0 1 -2 2h-10a2 2 0 0 1 -2 -2z"/><path d="M9 7l6 0"/><path d="M9 11l6 0"/><path d="M9 15l4 0"/></svg>
<div class="b" style="left:1281px;top:885.1px;width:153px;height:27.0px;background:#fef9c3;border-radius:7px"></div>
<div class="t" style="left:957.5px;top:885.7px;width:800px;height:26px;line-height:26px;font-size:17.5px;color:#854d0e;text-align:center;font-weight:400;font-style:normal;letter-spacing:0px;">Attribute Specific</div>
<div class="b" style="left:1525.8px;top:884.5px;width:27px;height:27px;border-radius:50%;background:#22c55e"></div>
<svg class="i" style="left:1532.3px;top:891.1px;width:14px;height:14px;" viewBox="0 0 24 24" fill="none" stroke="#fff" stroke-width="3.2" stroke-linecap="round" stroke-linejoin="round"><path d="M5 12l5 5l10 -10"/></svg>
<div class="t" style="left:1309.0px;top:882.9px;width:800px;height:30px;line-height:30px;font-size:20px;color:#6b7280;text-align:center;font-weight:400;font-style:normal;letter-spacing:0px;">64</div>
<div class="t" style="left:1477.3px;top:882.9px;width:800px;height:30px;line-height:30px;font-size:20px;color:#6b7280;text-align:center;font-weight:400;font-style:normal;letter-spacing:-2.2px;">1161</div>
<svg class="i" style="left:1952.8px;top:881.9px;width:32px;height:32px;" viewBox="0 0 24 24" fill="none" stroke="#b91c1c" stroke-width="2" stroke-linecap="round" stroke-linejoin="round"><path d="M4 7l16 0"/><path d="M10 11l0 6"/><path d="M14 11l0 6"/><path d="M5 7l1 12a2 2 0 0 0 2 2h8a2 2 0 0 0 2 -2l1 -12"/><path d="M9 7v-3a1 1 0 0 1 1 -1h4a1 1 0 0 1 1 1v3"/></svg>
<div class="b" style="left:131px;top:935.8px;width:220px;height:43.700000000000045px;border:1px solid #d1d5db;border-radius:7px;background:#fff;box-shadow:0 1px 2px rgba(0,0,0,0.05)"></div>
<svg class="i" style="left:145.0px;top:944.1px;width:27px;height:27px;" viewBox="0 0 24 24" fill="none" stroke="#374151" stroke-width="2" stroke-linecap="round" stroke-linejoin="round"><path d="M12 5l0 14"/><path d="M5 12l14 0"/></svg>
<div class="t" style="left:178.1px;top:945.1px;width:1400px;height:25px;line-height:25px;font-size:16.9px;color:#374151;text-align:left;font-weight:400;font-style:normal;letter-spacing:0px;">Generate embedding</div>
<div class="b" style="left:359px;top:935.8px;width:245px;height:43.700000000000045px;border:1px solid #d1d5db;border-radius:7px;background:#fff;box-shadow:0 1px 2px rgba(0,0,0,0.05)"></div>
<svg class="i" style="left:373.0px;top:944.1px;width:27px;height:27px;" viewBox="0 0 24 24" fill="none" stroke="#374151" stroke-width="2" stroke-linecap="round" stroke-linejoin="round"><path d="M13.5 3.8h-7.2a2.5 2.5 0 0 0 -2.5 2.5v11.3a2.5 2.5 0 0 0 2.5 2.5h4.7"/><path d="M17.6 3.8v17.2"/><path d="M14.3 17.3l3.3 3.7l3.3 -3.7"/></svg>
<div class="t" style="left:405.4px;top:945.1px;width:1400px;height:25px;line-height:25px;font-size:16.8px;color:#374151;text-align:left;font-weight:400;font-style:normal;letter-spacing:0px;">See downloaded models</div>
<div class="t" style="left:130.0px;top:1022.4px;width:1400px;height:37px;line-height:37px;font-size:25px;color:#111827;text-align:left;font-weight:400;font-style:normal;letter-spacing:0px;">Labeling tasks</div>
<div class="t" style="left:130.0px;top:1065.8px;width:1400px;height:29px;line-height:29px;font-size:19.9px;color:#374151;text-align:left;font-weight:400;font-style:normal;letter-spacing:0px;">Define what kind of things you want to label. We currently support classifications and extractions.</div>
<div class="b" style="left:129px;top:1094.1000000000001px;width:1898px;height:206.1px;border:1px solid #dcdee3;border-radius:10px;background:#f3f4f6;box-shadow:0 1px 3px rgba(0,0,0,0.10),0 1px 2px rgba(0,0,0,0.06)"></div>
<div class="b" style="left:134px;top:1099px;width:1888px;height:201px;background:#fff"></div>
<div class="b" style="left:134px;top:1099px;width:1888px;height:45.299999999999955px;background:#f9fafb;border-bottom:1.5px solid #d1d5db"></div>
<div class="t" style="left:-201.5px;top:1109.5px;width:800px;height:22px;line-height:22px;font-size:15px;color:#6b7280;text-align:center;font-weight:400;font-style:normal;letter-spacing:0.4px;">TARGET</div>
<div class="t" style="left:39.0px;top:1109.5px;width:800px;height:22px;line-height:22px;font-size:15px;color:#6b7280;text-align:center;font-weight:400;font-style:normal;letter-spacing:0.4px;">NAME</div>
<div class="t" style="left:395.0px;top:1109.5px;width:800px;height:22px;line-height:22px;font-size:15px;color:#6b7280;text-align:center;font-weight:400;font-style:normal;letter-spacing:0.4px;">TASK TYPE</div>
<div class="t" style="left:1065.0px;top:1109.5px;width:800px;height:22px;line-height:22px;font-size:15px;color:#6b7280;text-align:center;font-weight:400;font-style:normal;letter-spacing:0.4px;">LABELS</div>
<div class="b" style="left:134px;top:1144.3px;width:1888px;height:114.10000000000014px;background:#fff;border-bottom:1px solid #e5e7eb"></div>
<div class="b" style="left:134px;top:1258.4px;width:1888px;height:41.59999999999991px;background:#f9fafb"></div>
<div class="t" style="left:-201.5px;top:1186.0px;width:800px;height:29px;line-height:29px;font-size:19.5px;color:#6b7280;text-align:center;font-weight:400;font-style:normal;letter-spacing:0px;">reference</div>
<div class="t" style="left:39.8px;top:1186.0px;width:800px;height:29px;line-height:29px;font-size:19.45px;color:#6b7280;text-align:center;font-weight:400;font-style:normal;letter-spacing:0px;">Personal Identifiable Information (PII)</div>
<div class="b" style="left:633.4px;top:1175.8px;width:323.4px;height:49.5px;border:1px solid #d1d5db;border-radius:7px;background:#fff;box-shadow:0 1px 2px rgba(0,0,0,0.05)"></div>
<div class="t" style="left:656.2px;top:1185.5px;width:1400px;height:30px;line-height:30px;font-size:20px;color:#374151;text-align:left;font-weight:400;font-style:normal;letter-spacing:0px;">Information extraction</div>
<svg class="i" style="left:916.1px;top:1190.6px;width:21px;height:21px;" viewBox="0 0 24 24" fill="none" stroke="#374151" stroke-width="2" stroke-linecap="round" stroke-linejoin="round"><path d="M19.5 8.25l-7.5 7.5-7.5-7.5"/></svg>
<svg class="i" style="left:1974.0px;top:1184.5px;width:32px;height:32px;" viewBox="0 0 24 24" fill="none" stroke="#b91c1c" stroke-width="2" stroke-linecap="round" stroke-linejoin="round"><path d="M4 7l16 0"/><path d="M10 11l0 6"/><path d="M14 11l0 6"/><path d="M5 7l1 12a2 2 0 0 0 2 2h8a2 2 0 0 0 2 -2l1 -12"/><path d="M9 7v-3a1 1 0 0 1 1 -1h4a1 1 0 0 1 1 1v3"/></svg>
<div class="b" style="left:1003.3px;top:1160.3px;width:113.2px;height:34.5px;border:1.2px solid #fb923c;border-radius:8px;background:#ffedd5"></div>
<svg class="i" style="left:1012.8px;top:1167.0px;width:21px;height:21px;" viewBox="0 0 24 24" fill="none" stroke="#c2410c" stroke-width="2" stroke-linecap="round" stroke-linejoin="round"><path d="M11 7l6 6"/><path d="M4 16l11.7 -11.7a1 1 0 0 1 1.4 0l2.6 2.6a1 1 0 0 1 0 1.4l-11.7 11.7h-4v-4z"/></svg>
<div class="t" style="left:1040.1px;top:1163.5px;width:1400px;height:28px;line-height:28px;font-size:19.2px;color:#c2410c;text-align:left;font-weight:400;font-style:normal;letter-spacing:0px;">Date</div>
<svg class="i" style="left:1086.0px;top:1167.3px;width:21px;height:21px;" viewBox="0 0 24 24" fill="none" stroke="#c2410c" stroke-width="2" stroke-linecap="round" stroke-linejoin="round"><path d="M4 7l16 0"/><path d="M10 11l0 6"/><path d="M14 11l0 6"/><path d="M5 7l1 12a2 2 0 0 0 2 2h8a2 2 0 0 0 2 -2l1 -12"/><path d="M9 7v-3a1 1 0 0 1 1 -1h4a1 1 0 0 1 1 1v3"/></svg>
<div class="b" style="left:1128px;top:1160.3px;width:127.8px;height:34.5px;border:1.2px solid #2dd4bf;border-radius:8px;background:#ccfbf1"></div>
<svg class="i" style="left:1137.5px;top:1167.0px;width:21px;height:21px;" viewBox="0 0 24 24" fill="none" stroke="#0f766e" stroke-width="2" stroke-linecap="round" stroke-linejoin="round"><path d="M11 7l6 6"/><path d="M4 16l11.7 -11.7a1 1 0 0 1 1.4 0l2.6 2.6a1 1 0 0 1 0 1.4l-11.7 11.7h-4v-4z"/></svg>
<div class="t" style="left:1164.8px;top:1163.5px;width:1400px;height:28px;line-height:28px;font-size:19.2px;color:#0f766e;text-align:left;font-weight:400;font-style:normal;letter-spacing:0px;">E-Mail</div>
<svg class="i" style="left:1225.3px;top:1167.3px;width:21px;height:21px;" viewBox="0 0 24 24" fill="none" stroke="#0f766e" stroke-width="2" stroke-linecap="round" stroke-linejoin="round"><path d="M4 7l16 0"/><path d="M10 11l0 6"/><path d="M14 11l0 6"/><path d="M5 7l1 12a2 2 0 0 0 2 2h8a2 2 0 0 0 2 -2l1 -12"/><path d="M9 7v-3a1 1 0 0 1 1 -1h4a1 1 0 0 1 1 1v3"/></svg>
<div class="b" style="left:1267.5px;top:1160.3px;width:163.0px;height:34.5px;border:1.2px solid #a3e635;border-radius:8px;background:#ecfccb"></div>
<svg class="i" style="left:1277.0px;top:1167.0px;width:21px;height:21px;" viewBox="0 0 24 24" fill="none" stroke="#4d7c0f" stroke-width="2" stroke-linecap="round" stroke-linejoin="round"><path d="M11 7l6 6"/><path d="M4 16l11.7 -11.7a1 1 0 0 1 1.4 0l2.6 2.6a1 1 0 0 1 0 1.4l-11.7 11.7h-4v-4z"/></svg>
<div class="t" style="left:1304.3px;top:1163.5px;width:1400px;height:28px;line-height:28px;font-size:19.2px;color:#4d7c0f;text-align:left;font-weight:400;font-style:normal;letter-spacing:0px;">IP address</div>
<svg class="i" style="left:1400.0px;top:1167.3px;width:21px;height:21px;" viewBox="0 0 24 24" fill="none" stroke="#4d7c0f" stroke-width="2" stroke-linecap="round" stroke-linejoin="round"><path d="M4 7l16 0"/><path d="M10 11l0 6"/><path d="M14 11l0 6"/><path d="M5 7l1 12a2 2 0 0 0 2 2h8a2 2 0 0 0 2 -2l1 -12"/><path d="M9 7v-3a1 1 0 0 1 1 -1h4a1 1 0 0 1 1 1v3"/></svg>
<div class="b" style="left:1442px;top:1160.3px;width:148.6px;height:34.5px;border:1.2px solid #38bdf8;border-radius:8px;background:#e0f2fe"></div>
<svg class="i" style="left:1451.5px;top:1167.0px;width:21px;height:21px;" viewBox="0 0 24 24" fill="none" stroke="#0369a1" stroke-width="2" stroke-linecap="round" stroke-linejoin="round"><path d="M11 7l6 6"/><path d="M4 16l11.7 -11.7a1 1 0 0 1 1.4 0l2.6 2.6a1 1 0 0 1 0 1.4l-11.7 11.7h-4v-4z"/></svg>
<div class="t" style="left:1478.8px;top:1163.5px;width:1400px;height:28px;line-height:28px;font-size:19.2px;color:#0369a1;text-align:left;font-weight:400;font-style:normal;letter-spacing:0px;">Location</div>
<svg class="i" style="left:1560.1px;top:1167.3px;width:21px;height:21px;" viewBox="0 0 24 24" fill="none" stroke="#0369a1" stroke-width="2" stroke-linecap="round" stroke-linejoin="round"><path d="M4 7l16 0"/><path d="M10 11l0 6"/><path d="M14 11l0 6"/><path d="M5 7l1 12a2 2 0 0 0 2 2h8a2 2 0 0 0 2 -2l1 -12"/><path d="M9 7v-3a1 1 0 0 1 1 -1h4a1 1 0 0 1 1 1v3"/></svg>
<div class="b" style="left:1601.8px;top:1160.3px;width:182.2px;height:34.5px;border:1.2px solid #facc15;border-radius:8px;background:#fef9c3"></div>
<svg class="i" style="left:1611.3px;top:1167.0px;width:21px;height:21px;" viewBox="0 0 24 24" fill="none" stroke="#a16207" stroke-width="2" stroke-linecap="round" stroke-linejoin="round"><path d="M11 7l6 6"/><path d="M4 16l11.7 -11.7a1 1 0 0 1 1.4 0l2.6 2.6a1 1 0 0 1 0 1.4l-11.7 11.7h-4v-4z"/></svg>
<div class="t" style="left:1638.6px;top:1163.5px;width:1400px;height:28px;line-height:28px;font-size:19.2px;color:#a16207;text-align:left;font-weight:400;font-style:normal;letter-spacing:0px;">Organization</div>
<svg class="i" style="left:1753.5px;top:1167.3px;width:21px;height:21px;" viewBox="0 0 24 24" fill="none" stroke="#a16207" stroke-width="2" stroke-linecap="round" stroke-linejoin="round"><path d="M4 7l16 0"/><path d="M10 11l0 6"/><path d="M14 11l0 6"/><path d="M5 7l1 12a2 2 0 0 0 2 2h8a2 2 0 0 0 2 -2l1 -12"/><path d="M9 7v-3a1 1 0 0 1 1 -1h4a1 1 0 0 1 1 1v3"/></svg>
<div class="b" style="left:1795.5px;top:1160.3px;width:133.0px;height:34.5px;border:1.2px solid #f87171;border-radius:8px;background:#fee2e2"></div>
<svg class="i" style="left:1805.0px;top:1167.0px;width:21px;height:21px;" viewBox="0 0 24 24" fill="none" stroke="#b91c1c" stroke-width="2" stroke-linecap="round" stroke-linejoin="round"><path d="M11 7l6 6"/><path d="M4 16l11.7 -11.7a1 1 0 0 1 1.4 0l2.6 2.6a1 1 0 0 1 0 1.4l-11.7 11.7h-4v-4z"/></svg>
<div class="t" style="left:1832.3px;top:1163.5px;width:1400px;height:28px;line-height:28px;font-size:19.2px;color:#b91c1c;text-align:left;font-weight:400;font-style:normal;letter-spacing:0px;">Person</div>
<svg class="i" style="left:1898.0px;top:1167.3px;width:21px;height:21px;" viewBox="0 0 24 24" fill="none" stroke="#b91c1c" stroke-width="2" stroke-linecap="round" stroke-linejoin="round"><path d="M4 7l16 0"/><path d="M10 11l0 6"/><path d="M14 11l0 6"/><path d="M5 7l1 12a2 2 0 0 0 2 2h8a2 2 0 0 0 2 -2l1 -12"/><path d="M9 7v-3a1 1 0 0 1 1 -1h4a1 1 0 0 1 1 1v3"/></svg>
<div class="b" style="left:1141px;top:1206.5px;width:200.7px;height:34.0px;border:1.2px solid #4ade80;border-radius:8px;background:#dcfce7"></div>
<svg class="i" style="left:1150.5px;top:1213.0px;width:21px;height:21px;" viewBox="0 0 24 24" fill="none" stroke="#15803d" stroke-width="2" stroke-linecap="round" stroke-linejoin="round"><path d="M11 7l6 6"/><path d="M4 16l11.7 -11.7a1 1 0 0 1 1.4 0l2.6 2.6a1 1 0 0 1 0 1.4l-11.7 11.7h-4v-4z"/></svg>
<div class="t" style="left:1177.8px;top:1209.5px;width:1400px;height:28px;line-height:28px;font-size:19.2px;color:#15803d;text-align:left;font-weight:400;font-style:normal;letter-spacing:0px;">Phone number</div>
<svg class="i" style="left:1311.2px;top:1213.3px;width:21px;height:21px;" viewBox="0 0 24 24" fill="none" stroke="#15803d" stroke-width="2" stroke-linecap="round" stroke-linejoin="round"><path d="M4 7l16 0"/><path d="M10 11l0 6"/><path d="M14 11l0 6"/><path d="M5 7l1 12a2 2 0 0 0 2 2h8a2 2 0 0 0 2 -2l1 -12"/><path d="M9 7v-3a1 1 0 0 1 1 -1h4a1 1 0 0 1 1 1v3"/></svg>
<div class="b" style="left:1353.2px;top:1206.5px;width:115.4px;height:34.0px;border:1.2px solid #fbbf24;border-radius:8px;background:#fef3c7"></div>
<svg class="i" style="left:1362.7px;top:1213.0px;width:21px;height:21px;" viewBox="0 0 24 24" fill="none" stroke="#b45309" stroke-width="2" stroke-linecap="round" stroke-linejoin="round"><path d="M11 7l6 6"/><path d="M4 16l11.7 -11.7a1 1 0 0 1 1.4 0l2.6 2.6a1 1 0 0 1 0 1.4l-11.7 11.7h-4v-4z"/></svg>
<div class="t" style="left:1390.0px;top:1209.5px;width:1400px;height:28px;line-height:28px;font-size:19.2px;color:#b45309;text-align:left;font-weight:400;font-style:normal;letter-spacing:0px;">Time</div>
<svg class="i" style="left:1438.1px;top:1213.3px;width:21px;height:21px;" viewBox="0 0 24 24" fill="none" stroke="#b45309" stroke-width="2" stroke-linecap="round" stroke-linejoin="round"><path d="M4 7l16 0"/><path d="M10 11l0 6"/><path d="M14 11l0 6"/><path d="M5 7l1 12a2 2 0 0 0 2 2h8a2 2 0 0 0 2 -2l1 -12"/><path d="M9 7v-3a1 1 0 0 1 1 -1h4a1 1 0 0 1 1 1v3"/></svg>
<div class="b" style="left:1479.8px;top:1206.5px;width:106.6px;height:34.0px;border:1.2px solid #34d399;border-radius:8px;background:#d1fae5"></div>
<svg class="i" style="left:1489.3px;top:1213.0px;width:21px;height:21px;" viewBox="0 0 24 24" fill="none" stroke="#047857" stroke-width="2" stroke-linecap="round" stroke-linejoin="round"><path d="M11 7l6 6"/><path d="M4 16l11.7 -11.7a1 1 0 0 1 1.4 0l2.6 2.6a1 1 0 0 1 0 1.4l-11.7 11.7h-4v-4z"/></svg>
<div class="t" style="left:1516.6px;top:1209.5px;width:1400px;height:28px;line-height:28px;font-size:19.2px;color:#047857;text-align:left;font-weight:400;font-style:normal;letter-spacing:0px;transform:scaleX(0.83);transform-origin:0 50%;">URL</div>
<svg class="i" style="left:1555.9px;top:1213.3px;width:21px;height:21px;" viewBox="0 0 24 24" fill="none" stroke="#047857" stroke-width="2" stroke-linecap="round" stroke-linejoin="round"><path d="M4 7l16 0"/><path d="M10 11l0 6"/><path d="M14 11l0 6"/><path d="M5 7l1 12a2 2 0 0 0 2 2h8a2 2 0 0 0 2 -2l1 -12"/><path d="M9 7v-3a1 1 0 0 1 1 -1h4a1 1 0 0 1 1 1v3"/></svg>
<div class="b" style="left:1598px;top:1206.5px;width:148.7px;height:34.0px;border:1.2px solid #22d3ee;border-radius:8px;background:#cffafe"></div>
<svg class="i" style="left:1607.5px;top:1213.0px;width:21px;height:21px;" viewBox="0 0 24 24" fill="none" stroke="#0e7490" stroke-width="2" stroke-linecap="round" stroke-linejoin="round"><path d="M11 7l6 6"/><path d="M4 16l11.7 -11.7a1 1 0 0 1 1.4 0l2.6 2.6a1 1 0 0 1 0 1.4l-11.7 11.7h-4v-4z"/></svg>
<div class="t" style="left:1634.8px;top:1209.5px;width:1400px;height:28px;line-height:28px;font-size:19.2px;color:#0e7490;text-align:left;font-weight:400;font-style:normal;letter-spacing:0px;">Zip code</div>
<svg class="i" style="left:1716.2px;top:1213.3px;width:21px;height:21px;" viewBox="0 0 24 24" fill="none" stroke="#0e7490" stroke-width="2" stroke-linecap="round" stroke-linejoin="round"><path d="M4 7l16 0"/><path d="M10 11l0 6"/><path d="M14 11l0 6"/><path d="M5 7l1 12a2 2 0 0 0 2 2h8a2 2 0 0 0 2 -2l1 -12"/><path d="M9 7v-3a1 1 0 0 1 1 -1h4a1 1 0 0 1 1 1v3"/></svg>
<div class="b" style="left:1753.2px;top:1202.3px;width:42.299999999999955px;height:42.799999999999955px;background:#f3f4f6;border-radius:8px"></div>
<svg class="i" style="left:1760.3px;top:1209.7px;width:28px;height:28px;" viewBox="0 0 24 24" fill="none" stroke="#1f2937" stroke-width="2" stroke-linecap="round" stroke-linejoin="round"><path d="M12 5l0 14"/><path d="M5 12l14 0"/></svg>
<div class="b" style="left:633.4px;top:1270.4px;width:323.4px;height:49.59999999999991px;border:1px solid #d1d5db;border-radius:7px;background:#fff"></div>
<div class="b" style="left:1284.6px;top:1275.3px;width:152px;height:40px;border:1.2px solid #fb923c;border-radius:8px;background:#ffedd5"></div>
<div class="b" style="left:1449.7px;top:1275.3px;width:154px;height:40px;border:1.2px solid #f87171;border-radius:8px;background:#fee2e2"></div>
<div class="b" style="left:1610.7px;top:1270.8px;width:42.0px;height:49.200000000000045px;background:#f3f4f6;border-radius:8px"></div>
</body></html>
